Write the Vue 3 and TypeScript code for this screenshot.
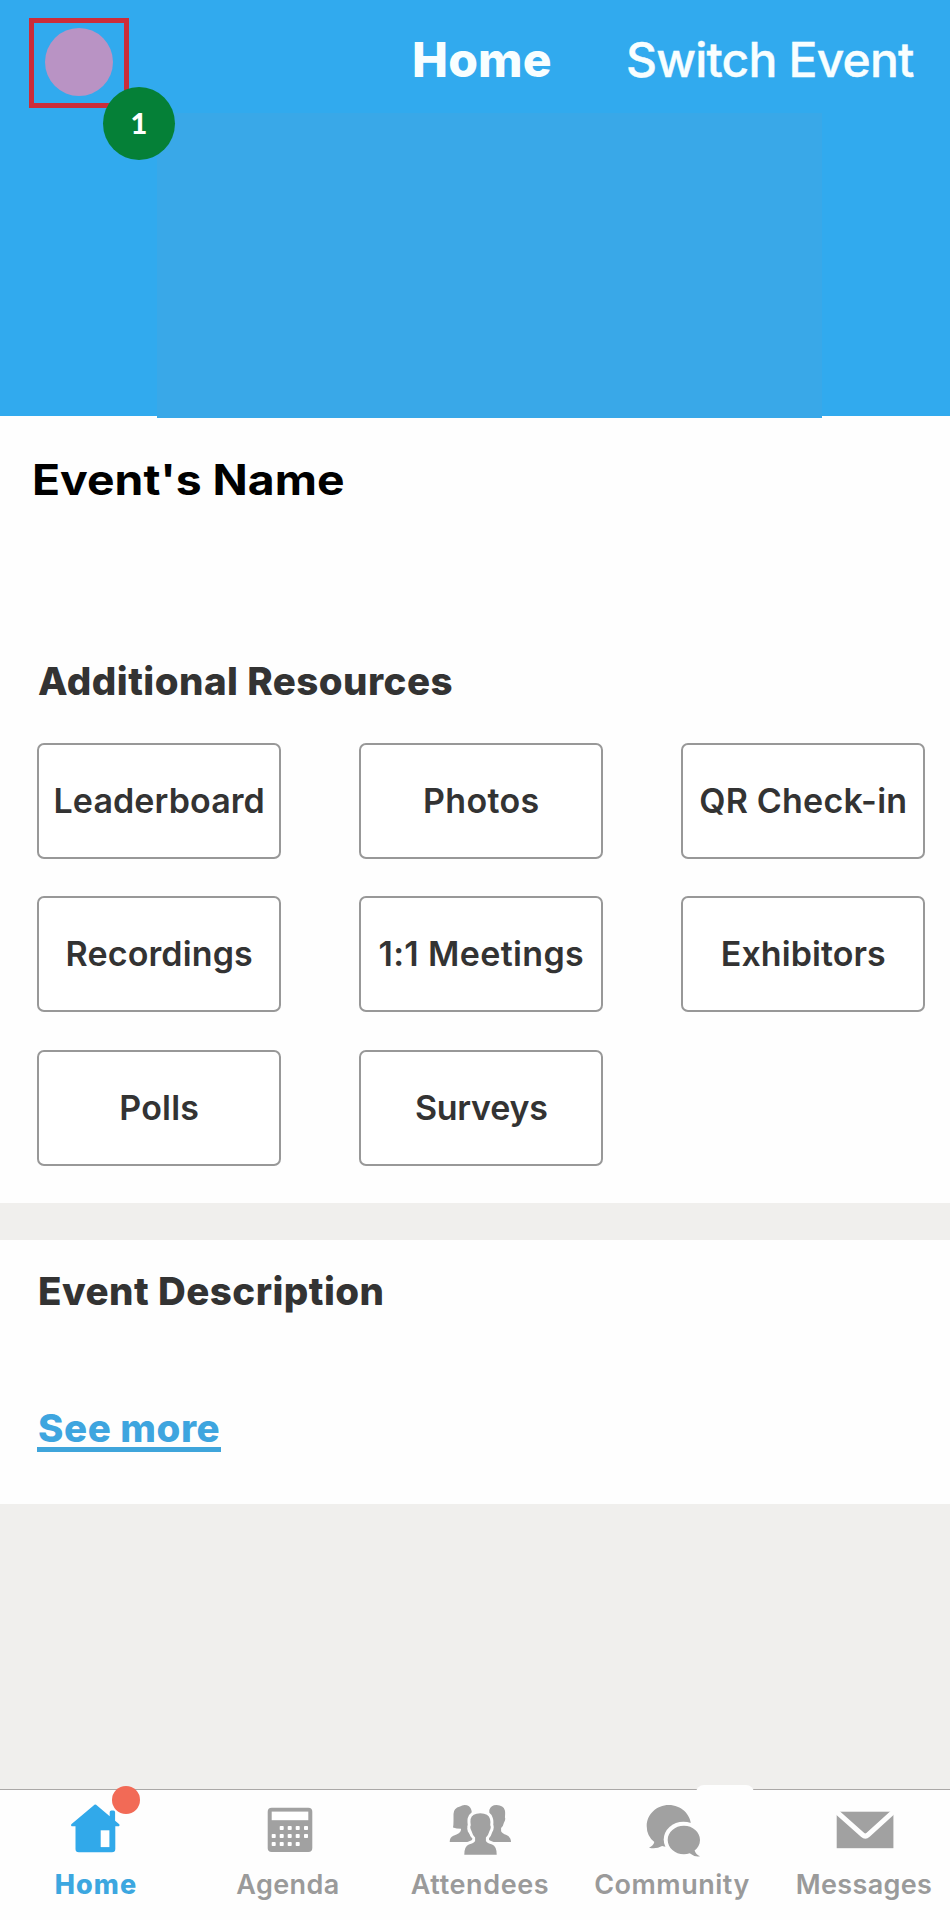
<script setup lang="ts">
interface Resource {
  label: string
  spacing: number
}
interface Tab {
  id: 'home' | 'agenda' | 'attendees' | 'community' | 'messages'
  label: string
  spacing: number
}

const resources: Resource[] = [
  { label: 'Leaderboard', spacing: 0.1 },
  { label: 'Photos', spacing: 0.35 },
  { label: 'QR Check-in', spacing: 0.19 },
  { label: 'Recordings', spacing: 0.13 },
  { label: '1:1 Meetings', spacing: 0.36 },
  { label: 'Exhibitors', spacing: 0.07 },
  { label: 'Polls', spacing: 0.2 },
  { label: 'Surveys', spacing: -0.25 },
]

const tabs: Tab[] = [
  { id: 'home', label: 'Home', spacing: 1.1 },
  { id: 'agenda', label: 'Agenda', spacing: 0.4 },
  { id: 'attendees', label: 'Attendees', spacing: 0.6 },
  { id: 'community', label: 'Community', spacing: 0.5 },
  { id: 'messages', label: 'Messages', spacing: 0.35 },
]
const activeTab: Tab['id'] = 'home'

const keyRows = [
  { y: 27, xs: [25.7, 33.7, 41.7, 50] },
  { y: 35, xs: [17.7, 25.7, 33.7, 41.7, 50] },
  { y: 43, xs: [17.7, 25.7, 33.7, 41.7] },
]
</script>

<template>
  <div class="screen">
    <header class="hero">
      <div class="bar">
        <div class="profile">
          <div class="avatar"></div>
          <span class="step">1</span>
        </div>
        <h1 class="title">Home</h1>
        <a class="switch">Switch Event</a>
      </div>
      <div class="banner"></div>
    </header>

    <main>
      <section class="card overview">
        <h2 class="event-name">Event's Name</h2>
        <h3 class="heading">Additional Resources</h3>
        <div class="grid">
          <button
            v-for="r in resources"
            :key="r.label"
            class="resource"
            :style="{ letterSpacing: r.spacing + 'px' }"
          >{{ r.label }}</button>
        </div>
      </section>

      <section class="card description">
        <h3 class="heading">Event Description</h3>
        <a class="more">See more</a>
      </section>
    </main>

    <nav class="tabs">
      <a v-for="t in tabs" :key="t.id" class="tab" :class="{ active: t.id === activeTab }">
        <i v-if="t.id === 'community'" class="bump"></i>
        <svg class="icon" viewBox="0 0 64 56" fill="currentColor">
          <template v-if="t.id === 'home'">
            <path d="M29.600 4.400q1.700-1.700 3.400 0L45.700 15.200V11.200q0-1.700 1.700-1.700h2q1.700 0 1.700 1.700v8.500l4.200 3.500q.8 2-1.300 2H51.300V48q0 3.300-3.300 3.300H14.800q-3.300 0-3.300-3.300V25.200H8.600q-2.200 0-1.300-2Z" />
            <path class="cut" d="M36.700 29.300h8.700v16.800h-8.700z" />
          </template>
          <template v-else-if="t.id === 'agenda'">
            <rect x="11.700" y="6.700" width="44.600" height="44.400" rx="4" />
            <rect class="cut" x="15.700" y="10.600" width="36.600" height="8.600" />
            <template v-for="row in keyRows" :key="row.y">
              <rect v-for="x in row.xs" :key="x" class="cut" :x="x - 2" :y="row.y - 2" width="4" height="4" rx=".8" />
            </template>
          </template>
          <template v-else-if="t.id === 'attendees'">
            <path d="M12 5.500Q15 3.200 19 4.300q4.500 1.500 5 8v14q-2 1-4.500.8l.3 3.300q1 2.500 5.200 4.100V41H1.700q0-4.600 3.700-6.200 7-2.200 7.600-5.800V27.800q-4.500 0-8-1.300.5-2.200.5-6.500V13q0-6 6.500-7.500Z" />
            <path d="M41.300 9q1.800-5 7.300-4.900 6.800.1 8.300 5.400.5 2.200 0 6.700 1 2.500-1 5.600-.7 3.600-2.800 5.200v3.300q.9 2.200 5.400 3.800Q63 36 63 41H41z" />
            <path class="person" d="M22.600 18Q24 12.300 32.300 12.200q8.300.1 9.700 5.800.7 2.200.2 6.300 1.400 2-.7 5.700-1 4-3.600 6.400v3.500q1.100 2 6.200 3.600 4.600 1.700 4.600 10.200H16.300q0-8.500 4.600-10.200 5.100-1.600 6.200-3.600v-3.500q-2.600-2.400-3.600-6.400-2-3.700-.7-5.700-.6-4.100-.2-6.300Z" />
          </template>
          <template v-else-if="t.id === 'community'">
            <path d="M28.800 4C41 4 51 13.300 51 24.800S41 46 28.800 46q-3.500 0-6.700-1Q16.200 48.500 9 46.800q4.500-2.300 5.300-5.800Q6.700 35 6.700 25C6.700 13.400 16.600 4 28.800 4Z" />
            <ellipse class="halo" cx="43.400" cy="38.400" rx="19.700" ry="17.700" />
            <path d="M43.900 24.700c8.900 0 16.100 6.400 16.100 14.200 0 4.500-2.200 8-5.400 10.600q1.200 4 5.400 5.700-5.600 1-10.300-2.900-2.700.9-5.800.9c-8.900 0-16.200-6.500-16.200-14.300s7.300-14.200 16.200-14.200Z" />
          </template>
          <template v-else>
            <rect x="4.700" y="10.700" width="56.700" height="36.500" />
            <path class="fold" d="M3.600 9.800 30.600 33.900q2.700 2.400 5.400 0L62.500 9.800" />
          </template>
        </svg>
        <span v-if="t.id === 'home'" class="dot"></span>
        <span class="label" :style="{ letterSpacing: t.spacing + 'px' }">{{ t.label }}</span>
      </a>
    </nav>
  </div>
</template>

<style>
body {
  margin: 0;
}
</style>

<style scoped>
.screen {
  display: flex;
  flex-direction: column;
  width: 950px;
  height: 1920px;
  overflow: hidden;
  background: #f0efed;
  font-family: Inter, "Liberation Sans", sans-serif;
  color: #333;
}
h1, h2, h3 {
  margin: 0;
}
.hero {
  position: relative;
  z-index: 1;
  height: 416px;
  background: #31aaee;
}
.bar {
  display: grid;
  grid-template-columns: 412px 214px 1fr;
  align-items: start;
  height: 113px;
  color: #f8feff;
}
.profile {
  position: relative;
  box-sizing: border-box;
  display: flex;
  justify-content: center;
  width: 100px;
  height: 90px;
  margin: 18px 0 0 29px;
  padding-top: 5px;
  border: 5px solid #cc2c39;
}
.avatar {
  width: 68px;
  height: 68px;
  border-radius: 50%;
  background: #b993c4;
}
.step {
  position: absolute;
  left: 69px;
  top: 64px;
  width: 72px;
  height: 73px;
  border-radius: 50%;
  background: #058037;
  color: #fff;
  font: 900 29px/71px Lato, sans-serif;
  text-align: center;
}
.title,
.switch {
  margin-top: 29.500px;
  font-size: 48px;
  line-height: 60px;
  white-space: nowrap;
}
.title {
  font-weight: 800;
  letter-spacing: 0.200px;
}
.switch {
  font-weight: 500;
  letter-spacing: -0.800px;
  -webkit-text-stroke: 0.400px currentColor;
}
.banner {
  width: 665px;
  height: 305px;
  margin-left: 157px;
  background: #39a8e8;
}
.card {
  box-sizing: border-box;
  padding-left: 37px;
  background: #fefefe;
}
.overview {
  height: 787px;
  padding-top: 38px;
}
.event-name {
  width: max-content;
  margin-left: -5.500px;
  color: #000;
  font-size: 42px;
  line-height: 52px;
  transform: scaleX(1.102);
  transform-origin: left;
}
.heading {
  margin-left: 1px;
  font-size: 38.500px;
  line-height: 46px;
  font-weight: 800;
  letter-spacing: 0.450px;
}
.overview .heading {
  margin-top: 152px;
}
.grid {
  display: grid;
  grid-template-columns: repeat(3, 244px);
  grid-auto-rows: 116px;
  gap: 37.500px 78px;
  margin-top: 38.500px;
}
.resource {
  box-sizing: border-box;
  padding: 0 0 0 .5px;
  border: 2px solid #989898;
  border-radius: 7px;
  background: #fff;
  color: #333;
  font: 600 34px/42px Inter, sans-serif;
  white-space: nowrap;
}
.description {
  height: 264px;
  margin-top: 37px;
  padding-top: 28px;
}
.more {
  display: block;
  width: 183px;
  margin-top: 95px;
  padding-left: 1px;
  border-bottom: 5px solid #3fa5db;
  color: #3ea5df;
  font-size: 38.500px;
  font-weight: 800;
  line-height: 38px;
  letter-spacing: 0.550px;
  white-space: nowrap;
}
.tabs {
  box-sizing: border-box;
  display: flex;
  height: 131px;
  margin-top: auto;
  border-top: 1px solid #aaa8a7;
  background: #fefefe;
}
.tab {
  position: relative;
  display: flex;
  flex: 0 0 192px;
  flex-direction: column;
  align-items: center;
  padding-top: 11px;
  color: #a1a1a1;
}
.tab.active {
  color: #31a9ea;
}
.icon {
  position: relative;
  width: 64px;
  height: 56px;
}
.cut {
  fill: #fff;
}
.person {
  stroke: #fefefe;
  stroke-width: 6;
  paint-order: stroke;
}
.halo {
  fill: #fefefe;
}
.fold {
  fill: none;
  stroke: #fefefe;
  stroke-width: 5;
}
.dot {
  position: absolute;
  left: 111.500px;
  top: -4px;
  width: 28px;
  height: 28px;
  border-radius: 50%;
  background: #f26a56;
}
.bump {
  position: absolute;
  left: 120px;
  top: -5px;
  width: 58px;
  height: 30px;
  border-radius: 8px;
  background: #fefefe;
}
.label {
  margin-top: 12px;
  color: #9a9a9a;
  font-size: 27px;
  font-weight: 600;
  line-height: 32px;
  white-space: nowrap;
}
.active .label {
  color: #3ca7e0;
  font-weight: 800;
}
</style>
